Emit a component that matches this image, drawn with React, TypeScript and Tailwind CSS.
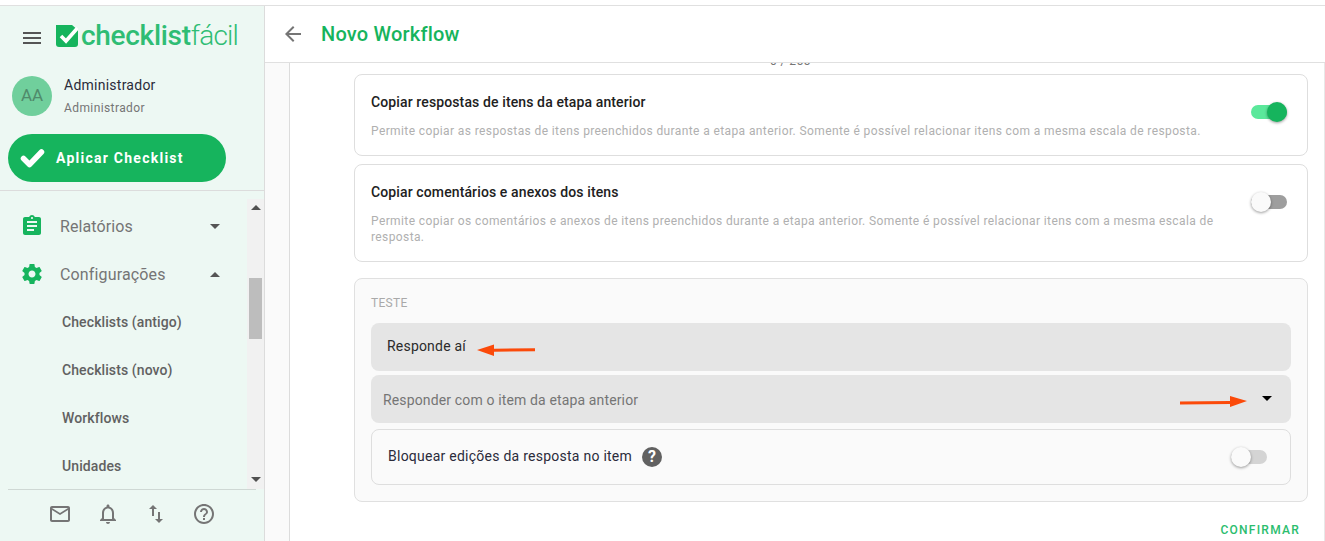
import React from 'react';

const Toggle = ({ on, faded }: { on?: boolean; faded?: boolean }) => (
    <div className={`relative w-[36px] h-[14px] rounded-full ${on ? 'bg-[#5be89b]' : faded ? 'bg-[#d4d4d4]' : 'bg-[#9e9e9e]'}`}>
        <div className={`absolute top-[-3px] w-[20px] h-[20px] rounded-full shadow-[0_1px_3px_rgba(0,0,0,0.4)] ${on ? 'right-0 bg-[#16b45d]' : 'left-0 bg-[#fafafa]'}`} />
    </div>
);

const Caret = ({ up, color }: { up?: boolean; color: string }) => (
    <svg width="10" height="5" viewBox="0 0 10 5" className={`shrink-0 ${color}`} fill="currentColor">
        <path d={up ? 'M0 5L5 0l5 5z' : 'M0 0l5 5 5-5z'} />
    </svg>
);

const MdIcon = ({ d, size = 24, className }: { d: string; size?: number; className?: string }) => (
    <svg width={size} height={size} viewBox="0 0 24 24" fill="currentColor" className={`shrink-0 ${className ?? ''}`}>
        <path d={d} />
    </svg>
);

const OptionCard = ({ title, text, on, height }: { title: string; text: string; on?: boolean; height: string }) => (
    <div className={`flex justify-between border border-[#dedede] rounded-[8px] bg-white pl-[16px] pr-[20px] ${height}`}>
        <div className="w-[850px] pt-[19px]">
            <p className="text-[14px] leading-[16px] font-medium tracking-[0.12px] text-[#212121]">{title}</p>
            <p className="mt-[13px] text-[12px] leading-[16px] tracking-[0.39px] text-[#b0b0b0]">{text}</p>
        </div>
        <div className="pt-[30px]">
            <Toggle on={on} />
        </div>
    </div>
);

const NavItem = ({ label }: { label: string }) => (
    <div className="h-[48px] pl-[62px] flex items-center text-[14px] font-medium tracking-[0.1px] text-[#616161]">{label}</div>
);

export default function App() {
    return (
        <div className="w-[1325px] h-[541px] overflow-hidden bg-white pt-[5px] font-['Roboto',sans-serif]">
            <div className="h-[536px] flex border-t border-[#e0e0e0]">
                {/* menu lateral */}
                <aside className="w-[265px] shrink-0 bg-[#edf8f3] border-r border-[#dcdcdc] flex flex-col">
                    <div className="h-[64px] shrink-0 flex items-center pl-[23px] gap-[15px]">
                        <div className="w-[18px] h-[12px] flex flex-col justify-between">
                            <div className="h-[2px] bg-[#555]" />
                            <div className="h-[2px] bg-[#555]" />
                            <div className="h-[2px] bg-[#555]" />
                        </div>
                        <div className="flex items-center mt-[-4px]">
                            <svg width="22" height="22" viewBox="0 0 22 22" className="shrink-0">
                                <path d="M0 0h22v19a3 3 0 0 1-3 3H3a3 3 0 0 1-3-3z" fill="#16b45d" />
                                <path d="M16 0h6v5z" fill="#edf8f3" />
                                <path d="M5 11l5 5L21.500 3" fill="none" stroke="#fff" strokeWidth="3.600" />
                            </svg>
                            <span className="ml-[3px] text-[28px] leading-[28px] font-medium tracking-[-0.3px] text-[#2fbd74]">checklist</span>
                            <span className="text-[28px] leading-[28px] font-light tracking-[-0.8px] text-[#2fbd74]">fácil</span>
                        </div>
                    </div>
                    <div className="flex pl-[12px] mt-[6px] h-[58px] shrink-0">
                        <div className="w-[40px] h-[40px] rounded-full bg-[#70cf9c] flex items-center justify-center text-[17px] text-[#4f8a6b]">AA</div>
                        <div className="ml-[12px]">
                            <p className="text-[14px] leading-[18px] tracking-[0.25px] text-[#2b2b3a]">Administrador</p>
                            <p className="mt-[6px] text-[12px] leading-[16px] tracking-[0.4px] text-[#757575]">Administrador</p>
                        </div>
                    </div>
                    <div className="pl-[8px] shrink-0">
                        <div className="w-[218px] h-[48px] rounded-full bg-[#16b45d] flex items-center pl-[12px]">
                            <svg width="25" height="20" viewBox="0 0 25 20" fill="none" stroke="white" strokeWidth="5.500" strokeLinecap="round" strokeLinejoin="round">
                                <path d="M3.500 10.500l6 6L21.500 4" />
                            </svg>
                            <span className="ml-[11px] text-[14px] font-bold tracking-[1.25px] text-white">Aplicar Checklist</span>
                        </div>
                    </div>
                    <div className="mt-[8px] border-t border-[#dcdcdc] flex-1 min-h-0 flex flex-col">
                        <div className="h-[290px] mt-[8px] shrink-0 flex">
                            <div className="w-[247px] overflow-hidden pt-[3px]">
                                <div className="h-[48px] flex items-center pl-[20px] pr-[27px]">
                                    <MdIcon className="text-[#16b45d]" d="M19 3h-4.180C14.400 1.840 13.300 1 12 1c-1.300 0-2.400.840-2.820 2H5c-1.100 0-2 .900-2 2v14c0 1.100.900 2 2 2h14c1.100 0 2-.900 2-2V5c0-1.100-.900-2-2-2zm-7 0c.550 0 1 .450 1 1s-.450 1-1 1-1-.450-1-1 .450-1 1-1zm2 14H7v-2h7v2zm3-4H7v-2h10v2zm0-4H7V7h10v2z" />
                                    <span className="ml-[16px] pt-[2px] flex-1 text-[16px] tracking-[0.1px] text-[#757575]">Relatórios</span>
                                    <Caret color="text-[#555]" />
                                </div>
                                <div className="h-[48px] flex items-center pl-[20px] pr-[27px]">
                                    <MdIcon className="text-[#16b45d]" d="M19.430 12.980c.040-.320.070-.640.070-.980s-.030-.660-.070-.980l2.110-1.650c.190-.150.240-.420.120-.640l-2-3.460c-.120-.220-.390-.300-.610-.220l-2.490 1c-.520-.400-1.080-.730-1.690-.980l-.380-2.650C14.460 2.180 14.250 2 14 2h-4c-.250 0-.460.180-.490.420l-.380 2.650c-.610.250-1.170.590-1.690.980l-2.490-1c-.230-.090-.490 0-.610.220l-2 3.460c-.130.220-.070.490.120.640l2.110 1.650c-.040.320-.070.650-.070.980s.030.660.070.980l-2.110 1.650c-.190.150-.240.420-.120.640l2 3.460c.120.220.390.300.610.220l2.490-1c.520.400 1.080.730 1.690.980l.380 2.650c.030.240.240.420.490.420h4c.250 0 .460-.180.490-.420l.380-2.650c.610-.250 1.170-.590 1.690-.980l2.490 1c.230.090.490 0 .610-.220l2-3.460c.120-.220.070-.490-.120-.640l-2.110-1.650zM12 15.500c-1.930 0-3.500-1.570-3.500-3.500s1.570-3.500 3.500-3.500 3.500 1.570 3.500 3.500-1.570 3.500-3.500 3.500z" />
                                    <span className="ml-[16px] pt-[2px] flex-1 text-[16px] tracking-[0.15px] text-[#757575]">Configurações</span>
                                    <Caret up color="text-[#555]" />
                                </div>
                                <NavItem label="Checklists (antigo)" />
                                <NavItem label="Checklists (novo)" />
                                <NavItem label="Workflows" />
                                <NavItem label="Unidades" />
                            </div>
                            {/* barra de rolagem */}
                            <div className="w-[17px] bg-[#f1f1f1] flex flex-col items-center pt-[6px] pb-[7px]">
                                <Caret up color="text-[#505050]" />
                                <div className="mt-[68px] w-[13px] h-[61px] bg-[#bdbdbd]" />
                                <div className="flex-1" />
                                <Caret color="text-[#505050]" />
                            </div>
                        </div>
                        <div className="mx-[8px] flex-1 border-t border-[#cfd8d4] flex items-center pl-[40px] pb-[3px] gap-[24px] text-[#757575]">
                            <MdIcon d="M22 6c0-1.100-.900-2-2-2H4c-1.100 0-2 .900-2 2v12c0 1.100.900 2 2 2h16c1.100 0 2-.900 2-2V6zm-2 0l-8 5-8-5h16zm0 12H4V8l8 5 8-5v10z" />
                            <MdIcon d="M12 22c1.100 0 2-.900 2-2h-4c0 1.100.900 2 2 2zm6-6v-5c0-3.070-1.630-5.640-4.500-6.320V4c0-.830-.670-1.500-1.500-1.500s-1.500.670-1.500 1.500v.680C7.640 5.360 6 7.920 6 11v5l-2 2v1h16v-1l-2-2zm-2 1H8v-6c0-2.480 1.510-4.500 4-4.500s4 2.020 4 4.500v6z" />
                            <MdIcon d="M16 17.010V10h-2v7.010h-3L15 21l4-3.990h-3zM9 3L5 6.990h3V14h2V6.990h3L9 3z" />
                            <MdIcon d="M11 18h2v-2h-2v2zm1-16C6.480 2 2 6.480 2 12s4.480 10 10 10 10-4.480 10-10S17.520 2 12 2zm0 18c-4.410 0-8-3.590-8-8s3.590-8 8-8 8 3.590 8 8-3.590 8-8 8zm0-14c-2.210 0-4 1.790-4 4h2c0-1.100.900-2 2-2s2 .900 2 2c0 2-3 1.750-3 5h2c0-2.250 3-2.500 3-5 0-2.210-1.790-4-4-4z" />
                        </div>
                    </div>
                </aside>

                <main className="flex-1 min-w-0 flex flex-col">
                    <header className="h-[57px] shrink-0 border-b border-[#e0e0e0] flex items-center pl-[16px]">
                        <MdIcon className="text-[#757575]" d="M20 11H7.830l5.590-5.590L12 4l-8 8 8 8 1.410-1.410L7.830 13H20v-2z" />
                        <h1 className="ml-[16px] text-[20px] font-medium tracking-[0.2px] text-[#16b45d]">Novo Workflow</h1>
                    </header>
                    <div className="flex-1 min-h-0 flex border-r border-[#e8e8e8]">
                        <div className="w-[25px] bg-[#fafafa] border-r border-[#dcdcdc]" />
                        <div className="flex-1 min-w-0 pl-[64px] pr-[16px]">
                            {/* contador cortado pelo topo da rolagem */}
                            <div className="h-[3px] mb-[8px] overflow-hidden flex items-end pl-[416px]">
                                <span className="mb-[-1px] text-[12px] leading-[12px] tracking-[0.4px] text-[#757575]">0 / 255</span>
                            </div>
                            <div className="flex flex-col gap-[8px]">
                                <OptionCard
                                    on
                                    height="h-[82px]"
                                    title="Copiar respostas de itens da etapa anterior"
                                    text="Permite copiar as respostas de itens preenchidos durante a etapa anterior. Somente é possível relacionar itens com a mesma escala de resposta."
                                />
                                <OptionCard
                                    height="h-[98px]"
                                    title="Copiar comentários e anexos dos itens"
                                    text="Permite copiar os comentários e anexos de itens preenchidos durante a etapa anterior. Somente é possível relacionar itens com a mesma escala de resposta."
                                />
                            </div>
                            <section className="mt-[16px] h-[224px] border border-[#e0e0e0] rounded-[8px] bg-[#fafafa] px-[16px] pt-[17px]">
                                <p className="text-[12px] leading-[14px] tracking-[0.3px] text-[#a9a9a9]">TESTE</p>
                                <div className="mt-[13px] h-[48px] rounded-[8px] bg-[#e5e5e5] flex items-center pl-[16px] text-[14px] tracking-[0.2px] text-[#2b2b2b]">
                                    <span className="mb-[2px]">Responde aí</span>
                                    <svg width="58" height="12" viewBox="0 0 58 12" className="ml-[11px] mt-[5px] shrink-0">
                                        <path d="M0 6l17-5.500v4.200l41-.500v3l-41 .500v4.300z" fill="#fb4a0a" />
                                    </svg>
                                </div>
                                <div className="mt-[4px] h-[48px] rounded-[8px] bg-[#e5e5e5] flex items-center pl-[12px] pr-[19px] text-[14px] tracking-[0.14px] text-[#757575]">
                                    <span className="flex-1 pt-[2px]">Responder com o item da etapa anterior</span>
                                    <svg width="68" height="12" viewBox="0 0 68 12" className="mt-[5px] mr-[14px] shrink-0">
                                        <path d="M0 5.500l50-.500V0l17 5-17 6V8L0 8.500z" fill="#fb4a0a" />
                                    </svg>
                                    <span className="mb-[2px]"><Caret color="text-black" /></span>
                                </div>
                                <div className="mt-[6px] h-[56px] rounded-[8px] border border-[#dedede] flex items-center pl-[16px] pr-[23px] text-[14px] tracking-[0.25px] text-[#2b2b3a]">
                                    <span className="mb-[2px]">Bloquear edições da resposta no item</span>
                                    <div className="ml-[10px] w-[20px] h-[20px] rounded-full bg-[#616161] flex items-center justify-center text-white text-[16px] font-bold">?</div>
                                    <div className="flex-1" />
                                    <Toggle faded />
                                </div>
                            </section>
                            <div className="mt-[20px] text-right pr-[8px] text-[12px] leading-[16px] font-medium tracking-[1.25px] text-[#2bbd6e]">CONFIRMAR</div>
                        </div>
                    </div>
                </main>
            </div>
        </div>
    );
}
